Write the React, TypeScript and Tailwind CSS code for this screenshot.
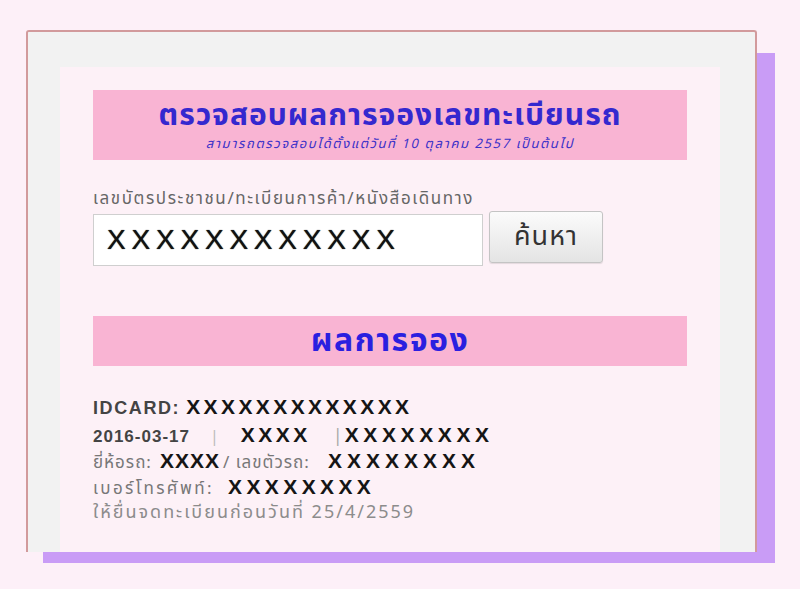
import React from "react";

const thai = "font-['Tahoma','Noto_Sans_Thai','Liberation_Sans',sans-serif]";
const mono = "font-['Liberation_Sans',Arial,sans-serif]";
const bigX = `${mono} text-[21px] leading-[26px] font-bold text-[#151515]`;

const App: React.FC = () => {
  return (
    <div className="relative w-[800px] h-[589px] overflow-hidden bg-[#fdf0f8] pt-[30px] pl-[26px]">
      {/* purple offset block behind the card */}
      <div className="absolute left-[43px] top-[53px] w-[732px] h-[510px] bg-[#c99cf6]" />

      <div className="relative w-[731px] h-[522px] rounded-t-[3px] border-2 border-b-0 border-[#d29a9c] bg-[#f2f2f2] pt-[35px] pl-[32px] pr-[35px]">
        <div className={`h-full bg-[#fdf1f7] px-[33px] pt-[23px] ${thai}`}>
          <div className="h-[70px] bg-[#f9b4d3] flex flex-col items-center pt-[9px]">
            <h1 className="text-[30px] leading-[34px] font-bold tracking-[1px] text-[#3428cf] whitespace-nowrap">ตรวจสอบผลการจองเลขทะเบียนรถ</h1>
            <p className="mt-[3px] text-[13px] leading-[16px] italic tracking-[1.6px] text-[#3a30c8] whitespace-nowrap">สามารถตรวจสอบได้ตั้งแต่วันที่ 10 ตุลาคม 2557 เป็นต้นไป</p>
          </div>

          <div className="mt-[29px] text-[17px] leading-[20px] tracking-[1.6px] text-[#666] whitespace-nowrap">เลขบัตรประชาชน/ทะเบียนการค้า/หนังสือเดินทาง</div>

          <div className="flex items-start gap-[6px] mt-[2px]">
            <div className="w-[390px] h-[52px] mt-[3px] bg-white border border-[#cfcfcf] flex items-center pl-[13px]">
              <span className={`${mono} text-[28px] tracking-[5.8px] text-[#111] [text-shadow:0_0_1px_#111]`}>XXXXXXXXXXXX</span>
            </div>
            <button className="w-[114px] h-[52px] rounded-[3px] border border-[#c4c4c4] bg-gradient-to-b from-[#fbfbfb] to-[#e4e4e4] text-[27px] tracking-[1px] text-[#333] shadow-[0_1px_1px_rgba(0,0,0,0.1)]">
              ค้นหา
            </button>
          </div>

          <div className="mt-[50px] h-[50px] bg-[#f9b4d3] flex items-center justify-center">
            <h2 className="text-[32px] leading-[40px] font-bold tracking-[1.5px] text-[#2a1fe0]">ผลการจอง</h2>
          </div>

          <div className="mt-[28px] text-[#444] whitespace-nowrap">
            <div className="flex items-baseline h-[28px]">
              <span className={`${mono} text-[18px] leading-[26px] font-bold tracking-[1.6px]`}>IDCARD:</span>
              <span className={`ml-[6px] ${bigX} tracking-[3.4px]`}>XXXXXXXXXXXXX</span>
            </div>
            <div className="flex items-baseline h-[26px]">
              <span className={`${mono} text-[17px] leading-[26px] font-bold tracking-[1px]`}>2016-03-17</span>
              <span className="ml-[20px] text-[16px] leading-[26px] text-[#bbb]">|</span>
              <span className={`ml-[22px] ${bigX} tracking-[3.5px]`}>XXXX</span>
              <span className="ml-[22px] text-[18px] leading-[26px] text-[#aaa]">|</span>
              <span className={`ml-[2px] ${bigX} tracking-[4.6px]`}>XXXXXXXX</span>
            </div>
            <div className="flex items-baseline h-[26px]">
              <span className="w-[67px] text-[17px] leading-[26px] tracking-[1px] text-[#777]">ยี่ห้อรถ:</span>
              <span className={`w-[63px] ${bigX} tracking-[1px]`}>XXXX</span>
              <span className="w-[105px] text-[17px] leading-[26px] tracking-[1px] text-[#777]">/ เลขตัวรถ:</span>
              <span className={`${bigX} tracking-[5px]`}>XXXXXXXX</span>
            </div>
            <div className="flex items-baseline h-[26px]">
              <span className="w-[135px] text-[17px] leading-[26px] tracking-[2.4px] text-[#777]">เบอร์โทรศัพท์:</span>
              <span className={`${bigX} tracking-[4.4px]`}>XXXXXXXX</span>
            </div>
            <div className="h-[26px] text-[18px] leading-[26px] tracking-[2px] text-[#8c8c8c]">ให้ยื่นจดทะเบียนก่อนวันที่ 25/4/2559</div>
          </div>
        </div>
      </div>
    </div>
  );
};

export default App;
